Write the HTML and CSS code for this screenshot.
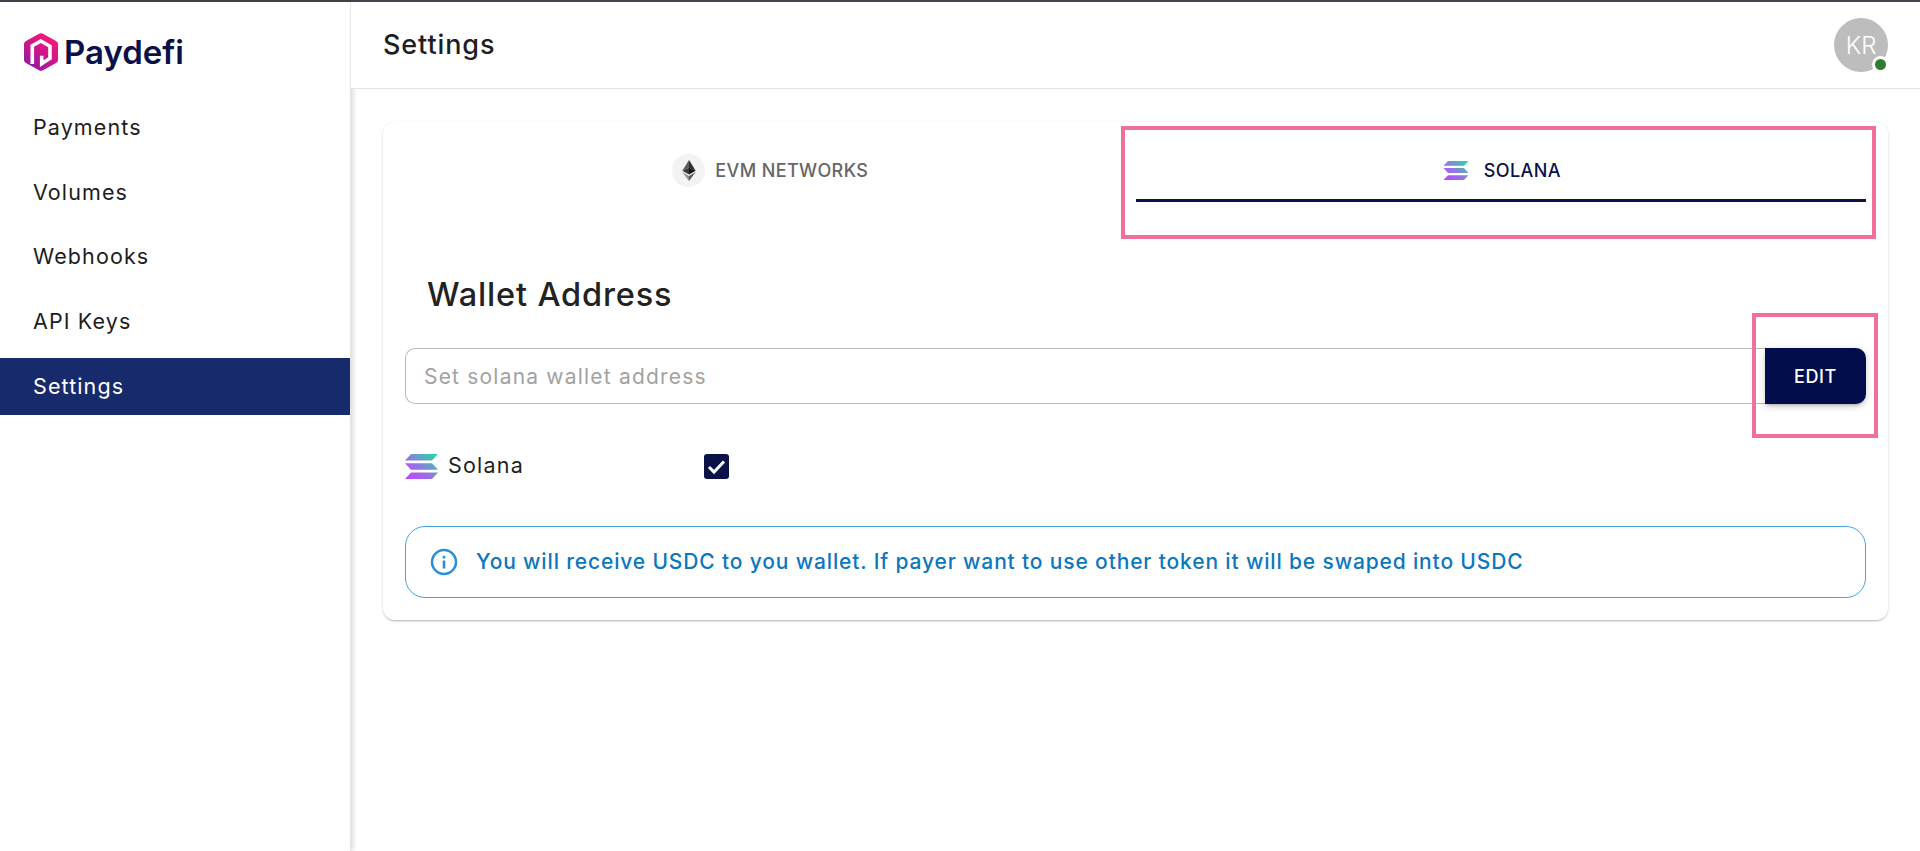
FILE: index.html
```html
<!DOCTYPE html>
<html lang="en">
<head>
<meta charset="utf-8">
<title>Settings - Paydefi</title>
<link rel="stylesheet" href="styles.css">
</head>
<body>
<svg class="defs" width="0" height="0" aria-hidden="true">
  <defs>
    <linearGradient id="sol" x1="0" y1="1" x2="1" y2="0">
      <stop offset="0" stop-color="#c63fff"/>
      <stop offset="0.42" stop-color="#9a70e6"/>
      <stop offset="0.68" stop-color="#5fa6c4"/>
      <stop offset="1" stop-color="#14e3a4"/>
    </linearGradient>
    <linearGradient id="logo" x1="0.1" y1="1" x2="0.75" y2="0.05">
      <stop offset="0" stop-color="#7a1fa8"/>
      <stop offset="0.55" stop-color="#d0158c"/>
      <stop offset="1" stop-color="#f5197a"/>
    </linearGradient>
    <symbol id="solana" viewBox="0 0 33 25">
      <path fill="url(#sol)" d="M6 0H33L27 6.4H0zM0 9.3H27L33 15.7H6zM6 18.6H33L27 25H0z"/>
    </symbol>
  </defs>
</svg>
<div class="topline"></div>
<div class="app">
  <aside class="sidebar">
    <div class="brand">
      <svg class="brand-mark" viewBox="0 0 34 38" aria-hidden="true">
        <path fill="url(#logo)" d="M15 .8Q17-.2 19 .8L32 8Q34 9 34 11V27Q34 29 32 30L19 37.2Q17 38.2 15 37.2L2 30Q0 29 0 27V11Q0 9 2 8Z"/>
        <path fill="none" stroke="#fff" stroke-width="3.600" d="M8.300 31V12.700L16.800 8 26 13.300V25.300L17.700 30.700V22.700"/>
      </svg>
      <span class="brand-name">Paydefi</span>
    </div>
    <nav class="nav">
      <a class="nav-item">Payments</a>
      <a class="nav-item">Volumes</a>
      <a class="nav-item">Webhooks</a>
      <a class="nav-item">API Keys</a>
      <a class="nav-item active">Settings</a>
    </nav>
  </aside>
  <div class="main">
    <header class="header">
      <h1 class="title">Settings</h1>
      <div class="avatar">KR<span class="status"></span></div>
    </header>
    <section class="content">
      <div class="card">
        <div class="tabs">
          <div class="tab">
            <span class="eth-badge">
              <svg class="eth" viewBox="0 0 14 22" aria-hidden="true">
                <path fill="#5c5c5c" d="M7 0 0 11.200 7 8.100z"/>
                <path fill="#2e2e2e" d="M7 0 14 11.200 7 8.100z"/>
                <path fill="#3a3a3a" d="M0 11.200 7 8.100V15.200z"/>
                <path fill="#141414" d="M14 11.200 7 8.100V15.200z"/>
                <path fill="#8f8f8f" d="M0 12.700 7 22V16.700z"/>
                <path fill="#5a5a5a" d="M14 12.700 7 22V16.700z"/>
              </svg>
            </span>
            <span>EVM NETWORKS</span>
          </div>
          <div class="tab selected">
            <svg class="sol-small"><use href="#solana"/></svg>
            <span>SOLANA</span>
          </div>
        </div>
        <h2 class="heading">Wallet Address</h2>
        <div class="field">
          <input class="input" type="text" placeholder="Set solana wallet address">
          <button class="edit" type="button">EDIT</button>
        </div>
        <div class="network">
          <div class="network-label">
            <svg class="sol-large"><use href="#solana"/></svg>
            <span>Solana</span>
          </div>
          <span class="checkbox">
            <svg viewBox="0 0 25 25" aria-hidden="true"><path fill="none" stroke="#fff" stroke-width="3" d="M5 13 10 18 20 7.500"/></svg>
          </span>
        </div>
        <div class="alert">
          <svg class="alert-icon" viewBox="0 0 28 28" aria-hidden="true">
            <circle cx="14" cy="14" r="12" fill="none" stroke="#2a8fd8" stroke-width="2.500"/>
            <rect x="12.700" y="12.500" width="2.600" height="8" fill="#2a8fd8"/>
            <rect x="12.700" y="7.800" width="2.600" height="2.700" fill="#2a8fd8"/>
          </svg>
          <span class="alert-text">You will receive USDC to you wallet. If payer want to use other token it will be swaped into USDC</span>
        </div>
      </div>
    </section>
  </div>
</div>
<div class="mark mark-tab"></div>
<div class="mark mark-edit"></div>
</body>
</html>
```
FILE: styles.css
```css
* { box-sizing: border-box; }
html, body { margin: 0; height: 100%; overflow: hidden; background: #fff; }
body { font-family: "Inter", "Liberation Sans", sans-serif; color: #1f1f1f; position: relative; }
.defs { position: absolute; }
.topline { height: 2px; background: #43464e; }
.app { display: flex; height: 849px; }

.sidebar { width: 351px; flex: none; border-right: 1px solid #e6e6e6; box-shadow: 2px 0 5px rgba(0,0,0,.16); background: #fff; }
.brand { height: 86px; display: flex; align-items: center; padding: 14px 0 0 24px; gap: 6px; }
.brand-mark { width: 34px; height: 38px; flex: none; }
.brand-name { font-size: 33px; font-weight: 600; color: #0b1048; letter-spacing: 0; }
.nav { display: flex; flex-direction: column; gap: 8px; padding-top: 12px; }
.nav-item { height: 56.600px; display: flex; align-items: center; padding: 0 0 2px 33px; font-size: 21.500px; color: #1d1d1d; letter-spacing: 1.100px; }
.nav-item.active { background: #172a6b; color: #fff; }

.main { flex: 1; min-width: 0; display: flex; flex-direction: column; position: relative; }
.header { height: 87px; flex: none; display: flex; align-items: center; justify-content: space-between; padding: 0 32px 2px 32px; border-bottom: 1px solid #e4e4e4; background: #fff; position: relative; z-index: 1; }
.title { margin: 0; font-size: 27px; font-weight: 500; color: #1f1f1f; letter-spacing: .9px; }
.avatar { width: 54px; height: 54px; border-radius: 50%; background: #bdbdbd; color: #fff; display: flex; align-items: center; justify-content: center; font-size: 24px; font-weight: 300; position: relative; margin-top: 2px; }
.status { position: absolute; right: -.5px; bottom: -.5px; width: 17px; height: 17px; border-radius: 50%; background: #2e7d32; border: 3px solid #fff; }

.content { padding: 33px 32px 0 32px; }
.card { background: #fff; border-radius: 12px; padding: 20px 22px 22px; box-shadow: 0 2px 2px -1px rgba(0,0,0,.2), 0 1px 3px rgba(0,0,0,.12), 0 0 2px rgba(0,0,0,.04); }

.tabs { display: grid; grid-template-columns: 1fr 1fr; }
.tab { height: 60px; display: flex; align-items: center; justify-content: center; gap: 10px; font-size: 18px; font-weight: 500; color: #666; letter-spacing: .4px; padding-bottom: 3px; }
.tab.selected { color: #0a1248; border-bottom: 3px solid #0a1248; padding: 0 0 0 2px; gap: 15px; }
.eth-badge { width: 33px; height: 33px; border-radius: 50%; background: #f3f3f3; display: flex; align-items: center; justify-content: center; }
.eth { width: 14px; height: 21px; }
.sol-small { width: 26px; height: 19px; }
.sol-large { width: 33px; height: 25px; flex: none; }

.heading { margin: 69px 0 29px 22px; font-size: 32.500px; line-height: 48px; font-weight: 500; color: #222; letter-spacing: .85px; }

.field { display: flex; height: 56px; }
.input { flex: 1; min-width: 0; height: 100%; border: 1px solid #b9b9b9; border-right: 0; border-radius: 10px 0 0 10px; padding: 0 18px; font: inherit; font-size: 21px; letter-spacing: 1.200px; color: #222; outline: 0; background: #fff; }
.input::placeholder { color: #a2a2a2; opacity: 1; }
.edit { width: 101px; height: 100%; flex: none; border: 0; border-radius: 0 10px 10px 0; background: #020d4c; color: #fff; font: inherit; font-size: 18px; font-weight: 500; letter-spacing: .6px; box-shadow: 0 3px 3px -2px rgba(0,0,0,.2), 0 3px 6px rgba(0,0,0,.12), 0 1px 10px rgba(0,0,0,.08); }

.network { display: grid; grid-template-columns: 299px 25px; align-items: center; margin-top: 49px; height: 25px; }
.network-label { display: flex; align-items: center; gap: 10px; font-size: 21.500px; letter-spacing: 1.200px; }
.network-label span { position: relative; top: -1px; }
.checkbox { width: 25px; height: 25px; border-radius: 3px; background: #0a1248; display: block; }
.checkbox svg { display: block; width: 25px; height: 25px; }

.alert { margin-top: 48px; height: 72px; border: 1px solid #4ba3df; border-radius: 20px; display: flex; align-items: center; gap: 18px; padding-left: 24px; font-size: 21px; font-weight: 500; color: #0c77bd; letter-spacing: .85px; }
.alert-text { padding-bottom: 2px; }
.alert-icon { width: 28px; height: 28px; flex: none; }

.mark { position: absolute; border: 4px solid #ef709c; pointer-events: none; }
.mark-tab { left: 1121px; top: 126px; width: 755px; height: 113px; }
.mark-edit { left: 1752px; top: 313px; width: 126px; height: 125px; }
```
